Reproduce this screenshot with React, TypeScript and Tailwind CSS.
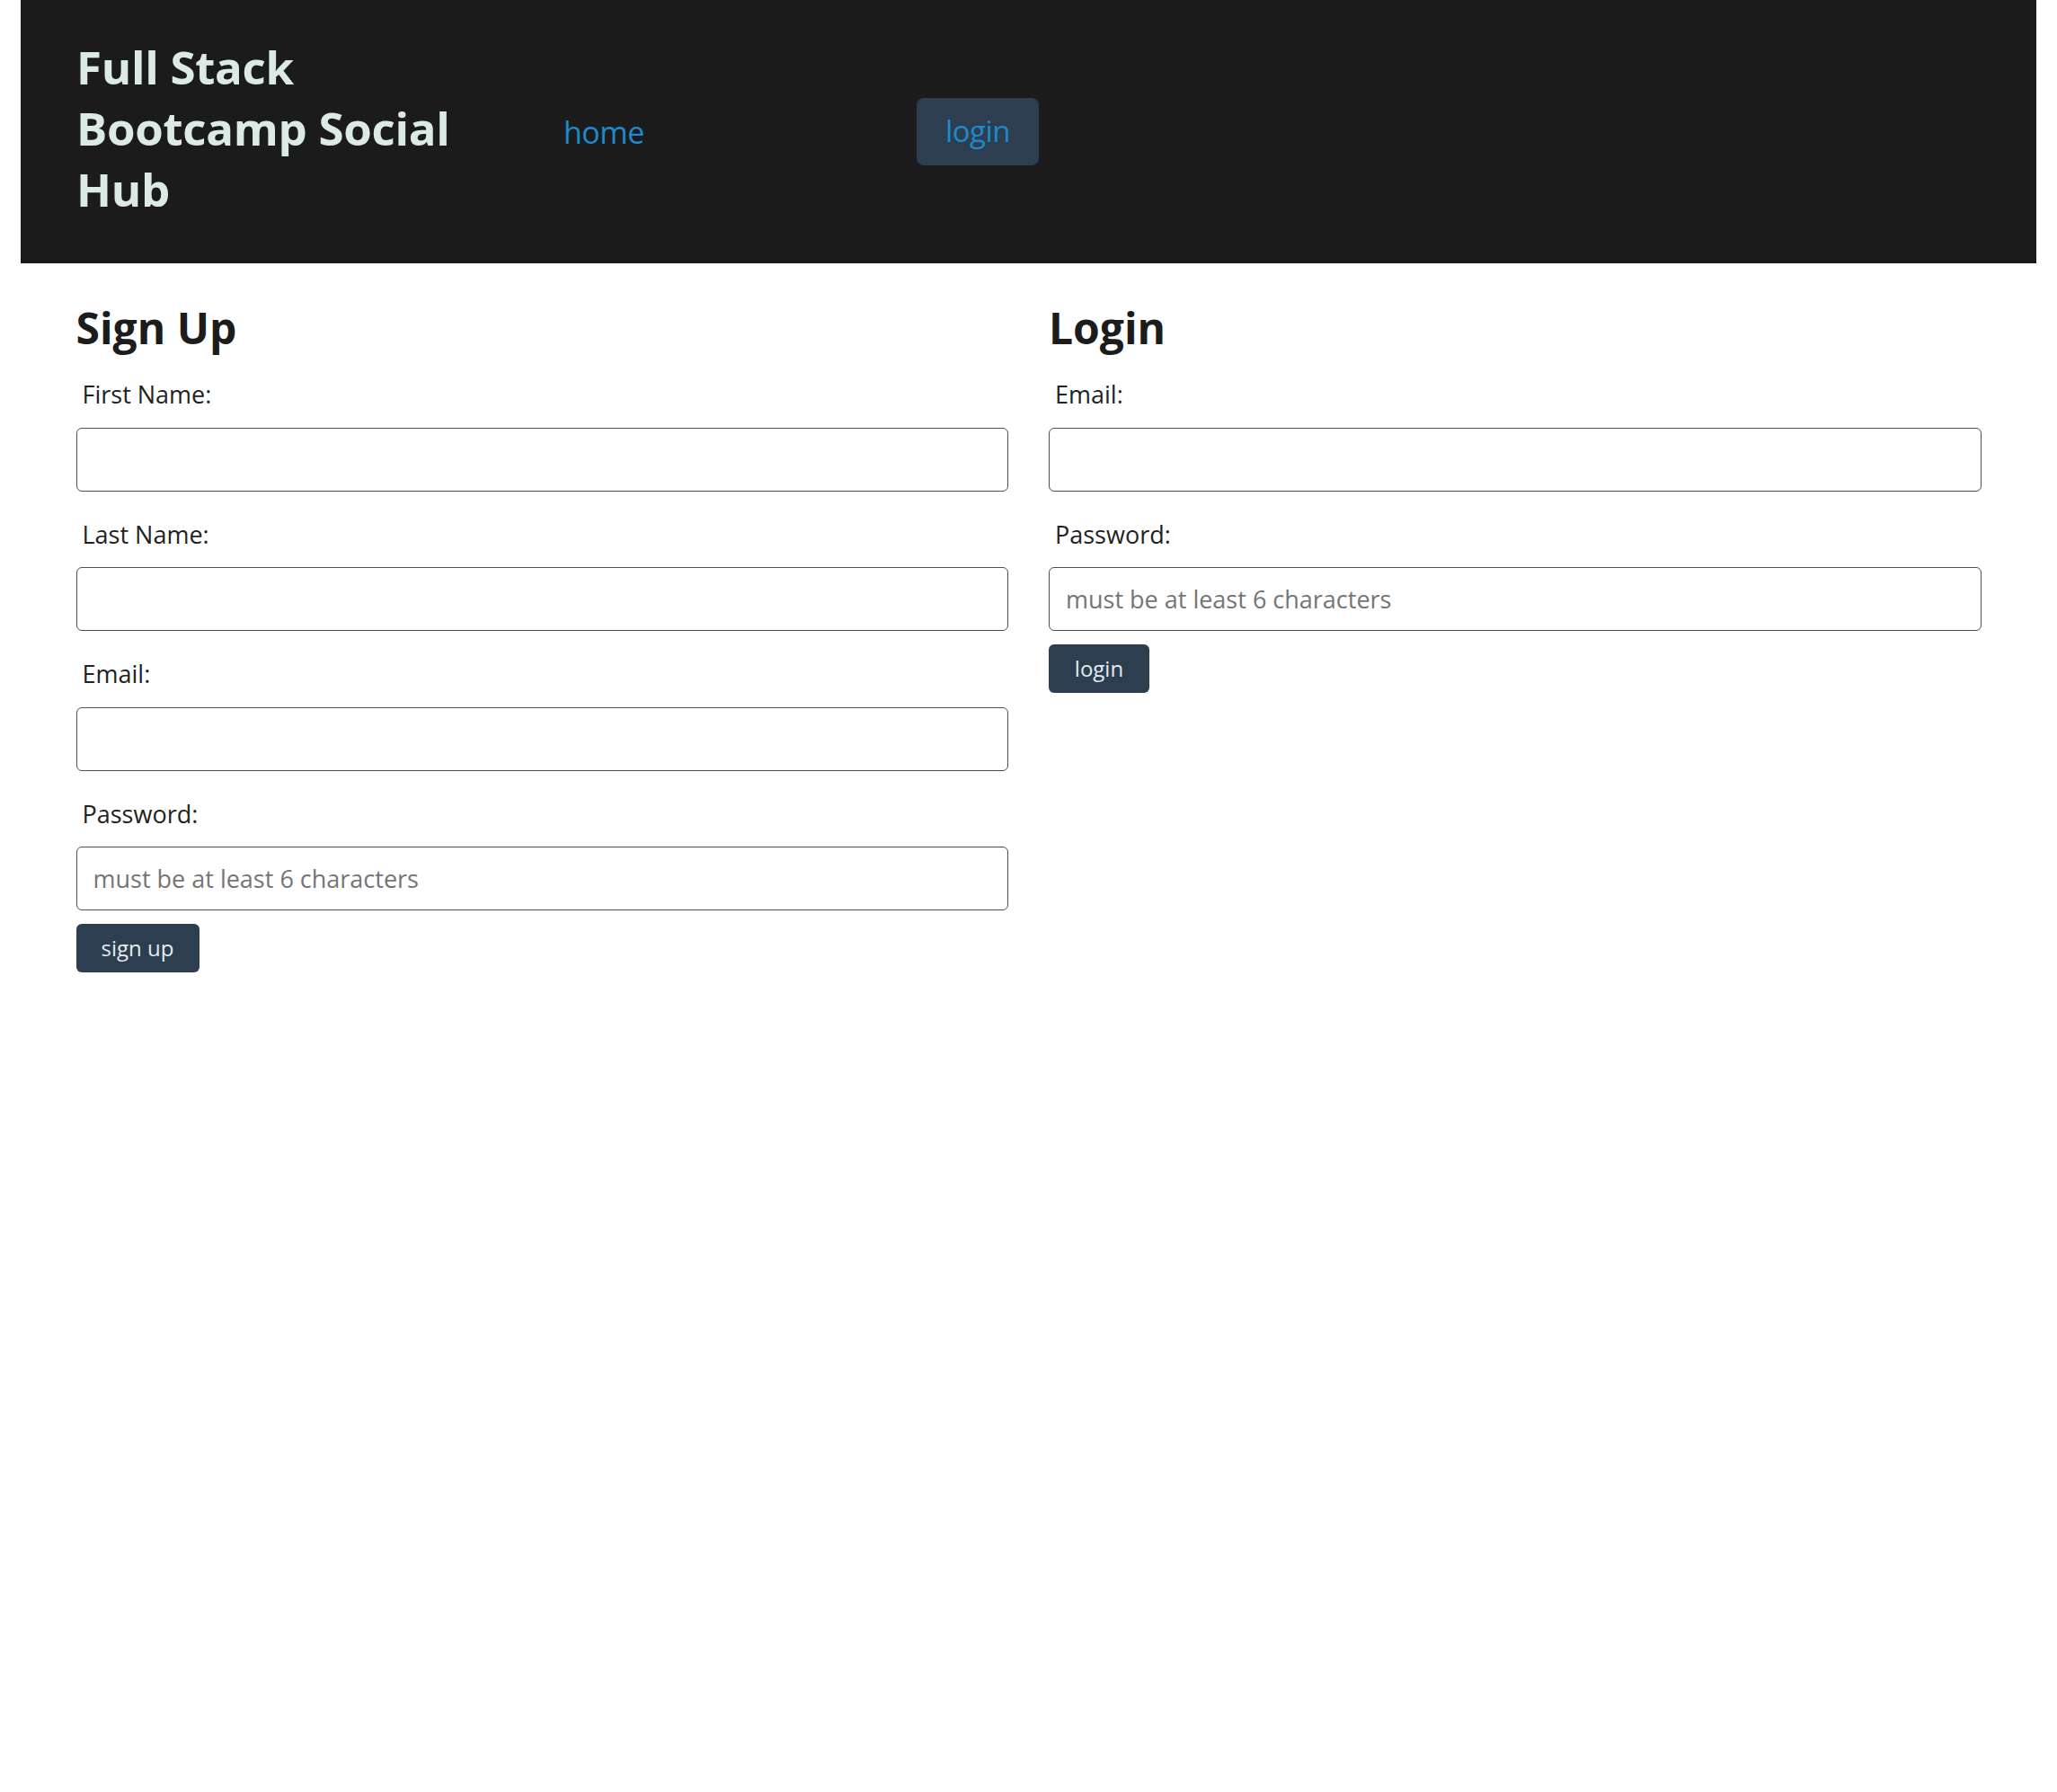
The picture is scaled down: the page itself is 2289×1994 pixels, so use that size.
import React from "react";

const font = { fontFamily: '"Open Sans", "Noto Sans", sans-serif' };

function Field({ label, placeholder, type = "text" }: { label: string; placeholder?: string; type?: string }) {
  return (
    <div className="flex flex-col">
      <label className="pl-[7px] text-[27px] leading-[36px] text-[#222222]">{label}</label>
      <input
        type={type}
        placeholder={placeholder}
        className="mt-[18.5px] h-[71px] w-full rounded-[6px] border-[1.5px] border-[#4f4f4f] bg-white px-[18px] text-[27px] text-[#222] outline-none placeholder:text-[#757575]"
      />
    </div>
  );
}

export default function App() {
  return (
    <div className="min-h-screen bg-white px-[23px]" style={font}>
      <header className="flex h-[293px] items-center bg-[#1b1b1b] pl-[62px]">
        <div className="w-[542px]">
          <h1 className="mb-[10px] w-[470px] text-[51px] font-bold leading-[68px] tracking-[-0.3px] text-[#dbe9e7]">
            Full Stack Bootcamp Social Hub
          </h1>
        </div>
        <div className="w-[393px]">
          <a href="#" className="text-[34px] leading-[48px] tracking-[-0.5px] text-[#2089c9]">
            home
          </a>
        </div>
        <button className="flex h-[75px] w-[136px] items-center justify-center rounded-[8px] bg-[#2c3e50] pb-[2px] text-[33px] leading-[48px] tracking-[-0.5px] text-[#2089c9]">
          login
        </button>
      </header>

      <main className="grid grid-cols-2 gap-x-[45px] px-[61.5px] pt-[40px]">
        <section className="flex flex-col">
          <h2 className="text-[48px] font-bold leading-[64px] text-[#1c1c1c]">Sign Up</h2>
          <div className="mt-[24px] flex flex-col gap-[30px]">
            <Field label="First Name:" />
            <Field label="Last Name:" />
            <Field label="Email:" />
            <Field label="Password:" type="password" placeholder="must be at least 6 characters" />
          </div>
          <div className="mt-[15px]">
            <button className="h-[54px] w-[137px] rounded-[6px] bg-[#2c3e50] text-[24px] text-[#e3ebf0]">sign up</button>
          </div>
        </section>
        <section className="flex flex-col">
          <h2 className="text-[48px] font-bold leading-[64px] text-[#1c1c1c]">Login</h2>
          <div className="mt-[24px] flex flex-col gap-[30px]">
            <Field label="Email:" />
            <Field label="Password:" type="password" placeholder="must be at least 6 characters" />
          </div>
          <div className="mt-[15px]">
            <button className="h-[54px] w-[112px] rounded-[6px] bg-[#2c3e50] text-[24px] text-[#e3ebf0]">login</button>
          </div>
        </section>
      </main>
    </div>
  );
}
